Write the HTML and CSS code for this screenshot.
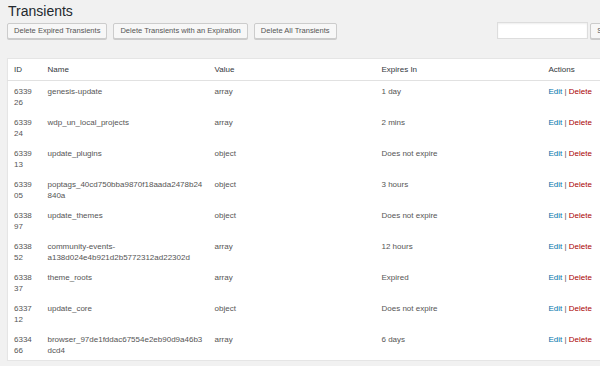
FILE: index.html
```html
<!DOCTYPE html>
<html lang="en">

<head>
    <meta charset="UTF-8">
    <meta name="viewport" content="width=device-width, initial-scale=1.0">
    <title>Transients</title>
    <link rel="stylesheet" href="styles.css">
</head>

<body>
    <div class="wrap">
        <h1>Transients</h1>
        <div class="toolbar">
            <div class="actions">
                <button type="button" class="button">Delete Expired Transients</button>
                <button type="button" class="button">Delete Transients with an Expiration</button>
                <button type="button" class="button">Delete All Transients</button>
            </div>
            <form class="search-box">
                <input type="search" name="s" value="">
                <button type="submit" class="button">Search Transients</button>
            </form>
        </div>

        <table class="transients">
            <thead>
                <tr>
                    <th class="col-id">ID</th>
                    <th class="col-name">Name</th>
                    <th class="col-value">Value</th>
                    <th class="col-expires">Expires In</th>
                    <th class="col-actions">Actions</th>
                </tr>
            </thead>
            <tbody>
                <tr>
                    <td>633926</td>
                    <td>genesis-update</td>
                    <td>array</td>
                    <td>1 day</td>
                    <td><a href="#" class="edit">Edit</a> | <a href="#" class="delete">Delete</a></td>
                </tr>
                <tr>
                    <td>633924</td>
                    <td>wdp_un_local_projects</td>
                    <td>array</td>
                    <td>2 mins</td>
                    <td><a href="#" class="edit">Edit</a> | <a href="#" class="delete">Delete</a></td>
                </tr>
                <tr>
                    <td>633913</td>
                    <td>update_plugins</td>
                    <td>object</td>
                    <td>Does not expire</td>
                    <td><a href="#" class="edit">Edit</a> | <a href="#" class="delete">Delete</a></td>
                </tr>
                <tr>
                    <td>633905</td>
                    <td>poptags_40cd750bba9870f18aada2478b24840a</td>
                    <td>object</td>
                    <td>3 hours</td>
                    <td><a href="#" class="edit">Edit</a> | <a href="#" class="delete">Delete</a></td>
                </tr>
                <tr>
                    <td>633897</td>
                    <td>update_themes</td>
                    <td>object</td>
                    <td>Does not expire</td>
                    <td><a href="#" class="edit">Edit</a> | <a href="#" class="delete">Delete</a></td>
                </tr>
                <tr>
                    <td>633852</td>
                    <td>community-events-a138d024e4b921d2b5772312ad22302d</td>
                    <td>array</td>
                    <td>12 hours</td>
                    <td><a href="#" class="edit">Edit</a> | <a href="#" class="delete">Delete</a></td>
                </tr>
                <tr>
                    <td>633837</td>
                    <td>theme_roots</td>
                    <td>array</td>
                    <td>Expired</td>
                    <td><a href="#" class="edit">Edit</a> | <a href="#" class="delete">Delete</a></td>
                </tr>
                <tr>
                    <td>633712</td>
                    <td>update_core</td>
                    <td>object</td>
                    <td>Does not expire</td>
                    <td><a href="#" class="edit">Edit</a> | <a href="#" class="delete">Delete</a></td>
                </tr>
                <tr>
                    <td>633466</td>
                    <td>browser_97de1fddac67554e2eb90d9a46b3dcd4</td>
                    <td>array</td>
                    <td>6 days</td>
                    <td><a href="#" class="edit">Edit</a> | <a href="#" class="delete">Delete</a></td>
                </tr>
            </tbody>
        </table>
    </div>
</body>

</html>
```

FILE: styles.css
```css
/* Reset */
* {
    box-sizing: border-box;
    margin: 0;
    padding: 0;
}

body {
    font-family: "Liberation Sans", Arial, sans-serif;
    font-size: 8px;
    color: #555;
    background-color: #f1f1f1;
    overflow: hidden;
}

.wrap {
    width: 665px;
    padding: 3px 0 0 7px;
}

h1 {
    font-size: 14px;
    font-weight: 400;
    line-height: 17px;
    color: #23282d;
    padding-left: 1px;
}

.toolbar {
    display: flex;
    justify-content: space-between;
    align-items: center;
    margin-top: 2px;
}

.actions {
    display: flex;
    gap: 6px;
}

.button {
    height: 16px;
    padding: 0 6px;
    font-family: inherit;
    font-size: 7.55px;
    line-height: 14px;
    color: #555;
    background-color: #f7f7f7;
    border: 1px solid #ccc;
    border-radius: 2px;
    box-shadow: 0 1px 0 #ccc;
    cursor: pointer;
    white-space: nowrap;
}

.search-box {
    display: flex;
    align-items: center;
    gap: 2px;
}

.search-box input {
    width: 91px;
    height: 17px;
    border: 1px solid #ddd;
    background-color: #fff;
    box-shadow: inset 0 1px 2px rgba(0, 0, 0, 0.07);
}

.transients {
    width: 100%;
    margin-top: 19px;
    table-layout: fixed;
    border-collapse: collapse;
    background-color: #fff;
    border: 1px solid #e5e5e5;
    box-shadow: 0 1px 1px rgba(0, 0, 0, 0.04);
}

.transients th,
.transients td {
    text-align: left;
    vertical-align: top;
    font-weight: 400;
    line-height: 11px;
    overflow-wrap: anywhere;
}

.transients th {
    padding: 5px 6px;
    color: #32373c;
    border-bottom: 1px solid #e1e1e1;
}

.transients td {
    padding: 5px 6px 4px;
}

.col-id {
    width: 34px;
}

.transients td:first-child,
.transients th:first-child {
    padding-right: 8px;
}

.col-name,
.col-value,
.col-expires {
    width: 167px;
}

.transients a {
    text-decoration: none;
}

.edit {
    color: #0073aa;
}

.delete {
    color: #a00;
}
```
